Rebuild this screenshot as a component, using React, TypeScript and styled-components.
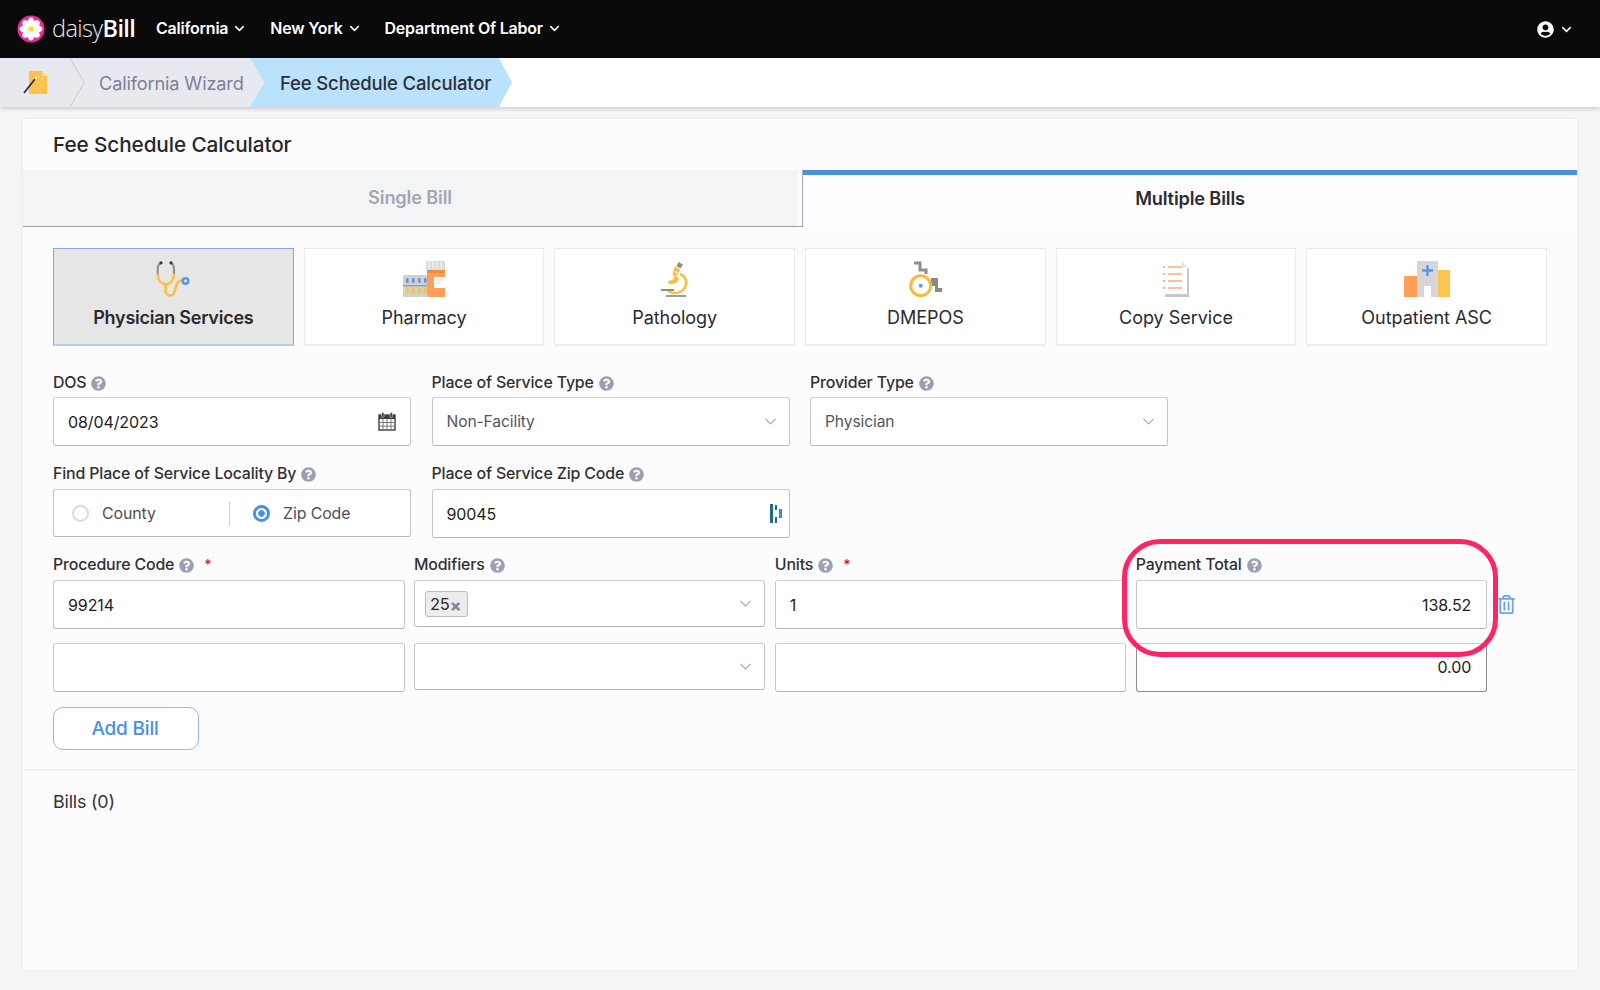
import React from "react";
import styled, { createGlobalStyle } from "styled-components";
import { ChevronDown } from "lucide-react";
import { FaQuestionCircle, FaUserCircle, FaRegTrashAlt } from "react-icons/fa";

const Global = createGlobalStyle`
  html, body { margin: 0; padding: 0; background: #f5f5f7; }
  body { font-family: Inter, "Liberation Sans", sans-serif; color: #2b2b2f; }
  * { box-sizing: border-box; }
`;

const Page = styled.div`
  width: 1600px;
  height: 990px;
  overflow: hidden;
  background: #f5f5f7;
`;
const TopBar = styled.header`
  height: 58px;
  background: #0a0a0a;
  display: flex;
  align-items: center;
  padding: 0 26px 0 17px;
  color: #fff;
`;
const Brand = styled.div`
  display: flex;
  align-items: center;
  gap: 7px;
  width: 139px;
`;
const BrandText = styled.span`
  font-family: "Open Sans", sans-serif;
  font-size: 23.5px;
  line-height: 24px;
  margin-top: -3px;
  font-weight: 300;
  letter-spacing: -0.6px;
  color: #e8e8e8;
  b { font-weight: 600; color: #fff; }
`;
const NavItem = styled.div`
  display: flex;
  align-items: center;
  gap: 4px;
  font-size: 15.95px;
  font-weight: 600;
  letter-spacing: -0.2px;
  margin-right: 23px;
  padding-bottom: 2px;
`;
const Spacer = styled.div`
  flex: 1;
`;
const UserMenu = styled.div`
  display: flex;
  align-items: center;
  gap: 5px;
`;
const CrumbBar = styled.nav`
  height: 49px;
  background: #fff;
  display: flex;
  box-shadow: 0 1px 5px rgba(0, 0, 0, 0.22);
  position: relative;
`;
const GreyCrumb = styled.div`
  width: 264px;
  height: 49px;
  display: flex;
  align-items: center;
  background: #e8e9ee;
  clip-path: polygon(0 0, 250px 0, 100% 50%, 250px 100%, 0 100%);
`;
const HomeCrumb = styled.div`
  width: 70px;
  display: flex;
  justify-content: center;
  padding-right: 1px;
`;
const CrumbText = styled.span`
  font-size: 18.2px;
  color: #7b8095;
  margin-left: 15px;
  letter-spacing: -0.15px;
`;
const ActiveCrumb = styled.div`
  width: 262px;
  height: 49px;
  margin-left: -14px;
  background: #bbe2fd;
  display: flex;
  align-items: center;
  padding-left: 30px;
  font-size: 18.5px;
  font-weight: 500;
  letter-spacing: -0.15px;
  color: #2d3038;
  clip-path: polygon(0 0, 249px 0, 100% 50%, 249px 100%, 0 100%, 14px 50%);
`;
const Card = styled.main`
  margin: 12px 23px 0;
  height: 851px;
  background: #fcfcfc;
  box-shadow: 0 0 4px rgba(0, 0, 0, 0.06);
`;
const CardTitle = styled.h1`
  margin: 0;
  height: 51px;
  padding: 0 30px;
  display: flex;
  align-items: center;
  font-size: 20.75px;
  font-weight: 500;
  letter-spacing: -0.1px;
  color: #26272b;
`;
const Tabs = styled.div`
  display: grid;
  grid-template-columns: 780px 1fr;
  height: 57px;
`;
const Tab = styled.div<{ $active?: boolean }>`
  display: flex;
  align-items: center;
  justify-content: center;
  font-size: 18.2px;
  font-weight: 600;
  letter-spacing: -0.15px;
  color: ${(p) => (p.$active ? "#2b2c33" : "#a3a6b5")};
  background: ${(p) => (p.$active ? "#fdfdfd" : "linear-gradient(to right, #f3f4f6 774px, #fafafb 774px)")};
  border-top: ${(p) => (p.$active ? "5px solid #4a90e2" : "none")};
  border-right: ${(p) => (p.$active ? "none" : "1px solid #a8aabb")};
  border-bottom: ${(p) => (p.$active ? "none" : "1px solid #9aa0b0")};
  padding: ${(p) => (p.$active ? "0 0 7px" : "0 5px 3px 0")};
`;
const Body = styled.div`
  padding: 21px 30px 0;
`;
const Services = styled.div`
  display: grid;
  grid-template-columns: repeat(6, 1fr);
  gap: 10px;
`;
const ServiceButton = styled.div<{ $active?: boolean }>`
  height: 98px;
  display: flex;
  flex-direction: column;
  align-items: center;
  padding-top: 12px;
  background: ${(p) => (p.$active ? "#e6e6e7" : "#fff")};
  border: 1px solid ${(p) => (p.$active ? "#7ea8e8" : "#e9e9ec")};
  border-bottom-width: 2px;
  border-bottom-color: ${(p) => (p.$active ? "#b5cdf0" : "#efeff1")};
`;
const ServiceIcon = styled.div`
  height: 36px;
  display: flex;
  align-items: flex-end;
`;
const ServiceLabel = styled.div<{ $active?: boolean }>`
  margin-top: 10px;
  font-size: 18px;
  line-height: 22px;
  font-weight: ${(p) => (p.$active ? 600 : 400)};
  letter-spacing: ${(p) => (p.$active ? "-0.25px" : "-0.03px")};
  color: #2a2a2e;
`;
const Field = styled.div`
  display: flex;
  flex-direction: column;
`;
const Label = styled.label`
  height: 20px;
  line-height: 20px;
  display: flex;
  align-items: center;
  gap: 5px;
  font-size: 15.9px;
  font-weight: 500;
  letter-spacing: -0.15px;
  color: #303136;
  margin-bottom: 5px;
  svg { color: #9b9fb3; flex: none; }
`;
const FormRow = styled.div<{ $cols: number }>`
  display: grid;
  grid-template-columns: repeat(${(p) => p.$cols}, 358px);
  column-gap: 20.5px;
  margin-top: 18px;
`;
const FirstFormRow = styled(FormRow)`
  margin-top: 27px;
  ${Label} { margin-bottom: 4px; }
`;
const Required = styled.span`
  color: #e0162b;
  margin-left: 5px;
  font-size: 14px;
`;
const InputBox = styled.div<{ $h?: number; $dark?: boolean; $right?: boolean; $top?: boolean; $tail?: number }>`
  height: ${(p) => p.$h ?? 49}px;
  background: #fff;
  border: 1px solid ${(p) => (p.$dark ? "#8b8b8b" : "#c6c6c9")};
  border-top-color: ${(p) => (p.$dark ? "#c8c8c8" : "#cfcfd2")};
  border-bottom-color: ${(p) => (p.$dark ? "#8b8b8b" : "#b4b4b8")};
  border-radius: 3px;
  display: flex;
  align-items: ${(p) => (p.$top ? "flex-start" : "center")};
  justify-content: ${(p) => (p.$right ? "flex-end" : "space-between")};
  padding: ${(p) => (p.$top ? "13px" : "0")} ${(p) => p.$tail ?? 15}px 0 14px;
  font-size: 16px;
  letter-spacing: -0.1px;
  color: #1d1d20;
`;
const SelectBox = styled(InputBox)`
  color: #55565c;
  font-size: 15.6px;
  padding-right: 9px;
  svg { color: #a0a0a6; }
`;
const EmptySelect = styled(SelectBox)`
  justify-content: flex-end;
`;
const MultiBox = styled(SelectBox)`
  padding-left: 10px;
`;
const Chip = styled.span`
  height: 26px;
  width: 43px;
  display: inline-flex;
  align-items: center;
  padding-left: 4px;
  font-size: 16.5px;
  color: #2c2c30;
  background: #ececed;
  border: 1px solid #bdbdc0;
  border-radius: 3px;
  i {
    font-style: normal;
    font-weight: 800;
    font-size: 17px;
    line-height: 15px;
    color: #86868a;
    margin-top: 4px;
  }
`;
const RadioGroup = styled(InputBox)`
  justify-content: flex-start;
  padding: 0 0 0 18px;
  color: #4e4f55;
  font-size: 15.9px;
`;
const RadioOption = styled.div<{ $w: number }>`
  width: ${(p) => p.$w}px;
  display: flex;
  align-items: center;
  gap: 13px;
`;
const RadioDot = styled.span<{ $on?: boolean }>`
  width: 17px;
  height: 17px;
  border-radius: 50%;
  border: ${(p) => (p.$on ? "3px solid #4a90e2" : "2.5px solid #dcdcde")};
  background: ${(p) => (p.$on ? "radial-gradient(circle, #4a90e2 0 3px, #fff 3.5px)" : "#fff")};
`;
const RadioDivider = styled.span`
  width: 1px;
  height: 25px;
  background: #cfcfd2;
  margin-right: 23px;
`;
const BillGrid = styled.div`
  display: grid;
  grid-template-columns: repeat(4, 351.5px) 30px;
  column-gap: 9.4px;
  row-gap: 14px;
  margin-top: 17px;
  align-items: start;
`;
const PayCell = styled.div`
  position: relative;
`;
const Highlight = styled.div`
  position: absolute;
  left: -14px;
  right: -11px;
  top: -16px;
  height: 118px;
  border: 5px solid #ff2463;
  border-radius: 38px;
  pointer-events: none;
`;
const TrashSlot = styled.div`
  padding: 40px 0 0 0;
  color: #6ea3ee;
`;
const AddButton = styled.button`
  display: block;
  margin-top: 15px;
  width: 146px;
  height: 43px;
  background: #fff;
  border: 1px solid #8fbcf1;
  border-radius: 10px;
  color: #4a90e2;
  font-family: inherit;
  font-size: 19px;
  font-weight: 500;
  letter-spacing: -0.2px;
  padding: 0 2px 0 0;
`;
const Divider = styled.hr`
  margin: 19px 0 0;
  border: 0;
  height: 2px;
  background: #f1f1f3;
`;
const BillsTitle = styled.div`
  margin-top: 20px;
  padding-left: 30px;
  font-size: 17.9px;
  line-height: 22px;
  letter-spacing: -0.2px;
  color: #333438;
`;

const Help = () => <FaQuestionCircle size={15} />;
const SelectChevron = () => <ChevronDown size={19} strokeWidth={1.3} />;

const Logo = () => (
  <svg width="28" height="28" viewBox="0 0 28 28">
    <circle cx="14" cy="14" r="13.5" fill="#ea2d93" />
    {[0, 45, 90, 135, 180, 225, 270, 315].map((a) => (
      <ellipse key={a} cx="14" cy="7.6" rx="3.4" ry="5" fill="#fff" transform={`rotate(${a} 14 14)`} />
    ))}
    <circle cx="14" cy="14" r="2.6" fill="#ffd91f" />
  </svg>
);
const Wand = () => (
  <svg width="26" height="26" viewBox="0 0 26 26">
    <path d="M7 1H20L25 6V24H7Z" fill="#fcc24e" />
    <path d="M20 1L25 6H20Z" fill="#fddc94" />
    <path d="M2 23L13 9" stroke="#2b2b2b" strokeWidth="1.7" />
    <path d="M13 9l2-2" stroke="#fff" strokeWidth="1.7" />
    <path d="M17 6v1M20 9h1M17 12v1M19 15v1M15 18v1M18 20v1" stroke="#fff4d0" strokeWidth="1.2" />
  </svg>
);
const Separator = () => (
  <svg width="14" height="49" viewBox="0 0 14 49" style={{ flex: "none" }}>
    <path d="M0 0L14 24.5L0 49" fill="none" stroke="#c5c7cf" strokeWidth="1" />
  </svg>
);
const Stethoscope = () => (
  <svg width="34" height="36" viewBox="0 0 34 36">
    <path d="M5 2C2 3 1.5 5 1.7 9V13M15 2C17.5 3 18 5 18 9V13" fill="none" stroke="#8d8d8d" strokeWidth="2" />
    <circle cx="5" cy="1.8" r="1.6" fill="#333" />
    <circle cx="15" cy="1.8" r="1.6" fill="#333" />
    <path d="M1.7 13C2 20 6 23 9.5 23.5C13.5 23 17.5 20 18 13" fill="none" stroke="#fbbf3f" strokeWidth="2.6" />
    <path d="M9.5 23.5V30C10 35.5 17 36 18.5 31C20 26 19.5 20 26 19.5" fill="none" stroke="#fbbf3f" strokeWidth="2.6" />
    <circle cx="29.5" cy="20" r="4" fill="#5c94e8" />
    <circle cx="29.5" cy="20" r="1.4" fill="#dfe9f8" />
  </svg>
);
const Pharmacy = () => (
  <svg width="42" height="36" viewBox="0 0 42 36">
    <rect x="0" y="14" width="26" height="22" rx="1" fill="#d0d0d0" />
    <rect x="0" y="24" width="26" height="1.4" fill="#9d9d9d" />
    {[3, 9, 15, 21].map((x) => (
      <g key={x}>
        <rect x={x} y="17" width="2.6" height="5" rx="1.3" fill="#5c94e8" />
        <rect x={x} y="27" width="2.6" height="6" rx="1.3" fill="#fbc243" />
      </g>
    ))}
    <rect x="23" y="0" width="19" height="9" fill="#dcdcdc" />
    <path d="M26 1v7M30 1v7M34 1v7M38 1v7" stroke="#f7f7f7" strokeWidth="1" />
    <path d="M24 9H42V36H27C25 36 24 35 24 33Z" fill="#ff9f55" />
    <rect x="24" y="9" width="18" height="3" fill="#f08c3e" />
    <rect x="31" y="16" width="11" height="11" fill="#fff" />
    <path d="M33 19h7M33 22h5" stroke="#d5d5d5" strokeWidth="1" />
  </svg>
);
const Microscope = () => (
  <svg width="28" height="36" viewBox="0 0 28 36">
    <path d="M19 13C25 15 26 21 24.5 25C23 30 18 32 13 32C10 32 8 31 7 29" fill="none" stroke="#fbbf3f" strokeWidth="2.6" />
    <path d="M17.5 1L22 3.5L19.5 7.5L15.5 5Z" fill="#8d8d8d" />
    <path d="M14 5.5L19 8.5L17.5 12L15 14.5L18 18L16.5 21L12 23L8 23L7 20L12 18.5L13.5 16L11.5 13Z" fill="#fbbf3f" />
    <circle cx="15" cy="11" r="1" fill="#fff" />
    <rect x="0" y="28" width="13" height="2" fill="#8d8d8d" />
    <rect x="5" y="34" width="20" height="2" fill="#9d9d9d" />
  </svg>
);
const Wheelchair = () => (
  <svg width="35" height="36" viewBox="0 0 35 36">
    <path d="M6 2H12V9H18V13" fill="none" stroke="#8d8d8d" strokeWidth="3" />
    <path d="M23 17H30V27H34V31H27V25H23Z" fill="#8a8a8a" />
    <circle cx="12.7" cy="24.7" r="10" fill="#fff" stroke="#fbb93a" strokeWidth="3" />
    <circle cx="12.7" cy="24.7" r="2" fill="#5c94e8" />
  </svg>
);
const CopyService = () => (
  <svg width="27" height="36" viewBox="0 0 27 36">
    <path d="M3 3H22L27 8V36H3Z" fill="#c8c8c8" />
    <path d="M0 0H20L25 6V33H0Z" fill="#fff" />
    <path d="M20 0L25 6H20Z" fill="#e2e2e2" />
    <path d="M6 6H20M6 13H20M6 20H20M6 27H20" stroke="#ffab78" strokeWidth="1.3" />
    <path d="M1 6H3M1 13H3M1 20H3M1 27H3" stroke="#ff9a5c" strokeWidth="1.3" />
  </svg>
);
const Hospital = () => (
  <svg width="46" height="36" viewBox="0 0 46 36">
    <rect x="0" y="15" width="13" height="21" fill="#ff9f55" />
    <rect x="13" y="0" width="21" height="36" fill="#d6d6d6" />
    <rect x="20" y="25" width="7" height="11" fill="#fff" />
    <rect x="34" y="9" width="12" height="27" fill="#ffc44d" />
    <path d="M23.5 4V15M18 9.5H29" stroke="#5c94e8" strokeWidth="2.4" />
  </svg>
);
const ZipMark = () => (
  <svg width="14" height="19" viewBox="0 0 14 19">
    <rect x="0" y="0" width="3" height="19" fill="#1b6f83" />
    <rect x="5" y="1" width="2" height="5" fill="#1b6f83" />
    <rect x="5" y="13" width="2" height="6" fill="#1b6f83" />
    <rect x="9" y="5" width="3" height="9" fill="#2f97ad" />
  </svg>
);
const CalendarIcon = () => (
  <svg width="18" height="19" viewBox="0 0 18 19">
    <rect x="1" y="3" width="16" height="15" fill="#fff" stroke="#3d3e44" strokeWidth="1.4" />
    <rect x="1" y="3" width="16" height="4" fill="#3d3e44" />
    <path d="M1 10.5H17M1 14.2H17M5 7V18M9 7V18M13 7V18" stroke="#6d6e75" strokeWidth="0.9" />
    <rect x="3.6" y="0.5" width="2.4" height="5" rx="1" fill="#3d3e44" stroke="#fff" strokeWidth="0.5" />
    <rect x="12" y="0.5" width="2.4" height="5" rx="1" fill="#3d3e44" stroke="#fff" strokeWidth="0.5" />
  </svg>
);

const services = [
  { label: "Physician Services", Icon: Stethoscope, active: true },
  { label: "Pharmacy", Icon: Pharmacy },
  { label: "Pathology", Icon: Microscope },
  { label: "DMEPOS", Icon: Wheelchair },
  { label: "Copy Service", Icon: CopyService },
  { label: "Outpatient ASC", Icon: Hospital },
];

export default function App() {
  return (
    <Page>
      <Global />
      <TopBar>
        <Brand>
          <Logo />
          <BrandText>
            daisy<b>Bill</b>
          </BrandText>
        </Brand>
        {["California", "New York", "Department Of Labor"].map((n) => (
          <NavItem key={n}>
            {n}
            <ChevronDown size={15} strokeWidth={2.4} />
          </NavItem>
        ))}
        <Spacer />
        <UserMenu>
          <FaUserCircle size={17} />
          <ChevronDown size={15} strokeWidth={2.4} />
        </UserMenu>
      </TopBar>
      <CrumbBar>
        <GreyCrumb>
          <HomeCrumb>
            <Wand />
          </HomeCrumb>
          <Separator />
          <CrumbText>California Wizard</CrumbText>
        </GreyCrumb>
        <ActiveCrumb>Fee Schedule Calculator</ActiveCrumb>
      </CrumbBar>
      <Card>
        <CardTitle>Fee Schedule Calculator</CardTitle>
        <Tabs>
          <Tab>Single Bill</Tab>
          <Tab $active>Multiple Bills</Tab>
        </Tabs>
        <Body>
          <Services>
            {services.map(({ label, Icon, active }) => (
              <ServiceButton key={label} $active={active}>
                <ServiceIcon>
                  <Icon />
                </ServiceIcon>
                <ServiceLabel $active={active}>{label}</ServiceLabel>
              </ServiceButton>
            ))}
          </Services>
          <FirstFormRow $cols={3}>
            <Field>
              <Label>
                DOS <Help />
              </Label>
              <InputBox $tail={14}>
                08/04/2023
                <CalendarIcon />
              </InputBox>
            </Field>
            <Field>
              <Label>
                Place of Service Type <Help />
              </Label>
              <SelectBox>
                Non-Facility
                <SelectChevron />
              </SelectBox>
            </Field>
            <Field>
              <Label>
                Provider Type <Help />
              </Label>
              <SelectBox>
                Physician
                <SelectChevron />
              </SelectBox>
            </Field>
          </FirstFormRow>
          <FormRow $cols={2}>
            <Field>
              <Label>
                Find Place of Service Locality By <Help />
              </Label>
              <RadioGroup $h={48}>
                <RadioOption $w={157}>
                  <RadioDot />
                  County
                </RadioOption>
                <RadioDivider />
                <RadioOption $w={120}>
                  <RadioDot $on />
                  Zip Code
                </RadioOption>
              </RadioGroup>
            </Field>
            <Field>
              <Label>
                Place of Service Zip Code <Help />
              </Label>
              <InputBox $tail={5}>
                90045
                <ZipMark />
              </InputBox>
            </Field>
          </FormRow>
          <BillGrid>
            <Field>
              <Label>
                Procedure Code <Help />
                <Required>*</Required>
              </Label>
              <InputBox>99214</InputBox>
            </Field>
            <Field>
              <Label>
                Modifiers <Help />
              </Label>
              <MultiBox $h={47}>
                <Chip>
                  25<i>×</i>
                </Chip>
                <SelectChevron />
              </MultiBox>
            </Field>
            <Field>
              <Label>
                Units <Help />
                <Required>*</Required>
              </Label>
              <InputBox>1</InputBox>
            </Field>
            <PayCell>
              <Highlight />
              <Field>
                <Label>
                  Payment Total <Help />
                </Label>
                <InputBox $right>138.52</InputBox>
              </Field>
            </PayCell>
            <TrashSlot>
              <FaRegTrashAlt size={19} />
            </TrashSlot>
            <InputBox />
            <EmptySelect $h={47}>
              <SelectChevron />
            </EmptySelect>
            <InputBox />
            <InputBox $right $top $dark>
              0.00
            </InputBox>
          </BillGrid>
          <AddButton>Add Bill</AddButton>
        </Body>
        <Divider />
        <BillsTitle>Bills (0)</BillsTitle>
      </Card>
    </Page>
  );
}
